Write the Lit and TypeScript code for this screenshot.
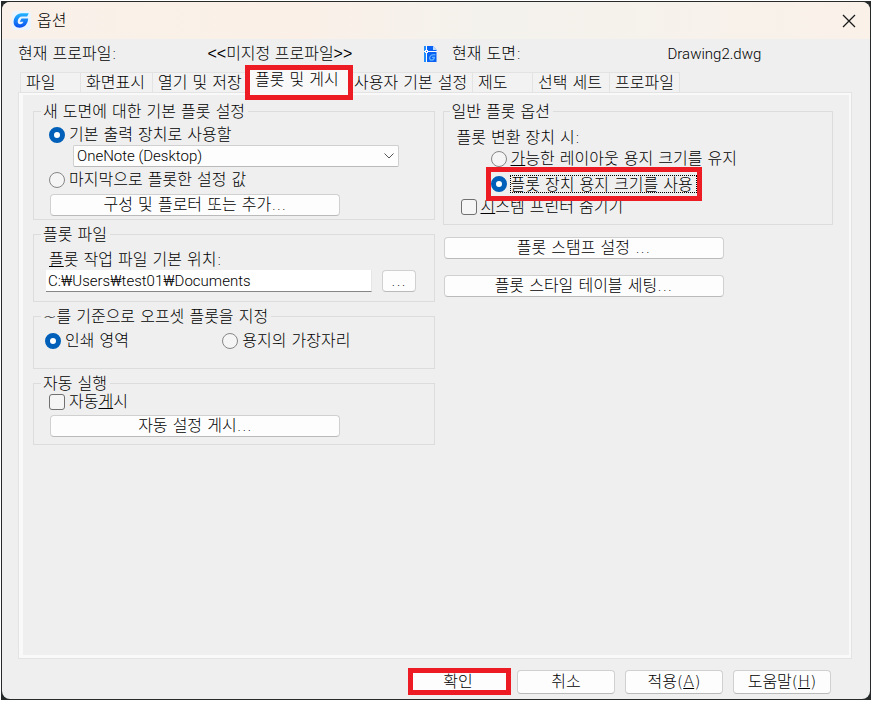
import { LitElement, html, css, svg } from "lit";
import { customElement, state } from "lit/decorators.js";
import { classMap } from "lit/directives/class-map.js";

const TABS = ["파일", "화면표시", "열기 및 저장", "플롯 및 게시", "사용자 기본 설정", "제도", "선택 세트", "프로파일"];

const logo = svg`
  <svg class="logo" viewBox="0 0 20 20" aria-hidden="true">
    <defs>
      <linearGradient id="lg" x1="0" y1="0" x2="0" y2="1">
        <stop offset="0" stop-color="#22b4ff"></stop>
        <stop offset="1" stop-color="#0b4ff0"></stop>
      </linearGradient>
    </defs>
    <rect width="20" height="20" rx="4" fill="#eaf5ff"></rect>
    <path fill="url(#lg)" d="M17.6 2.4 L16 5.8 H10.6 C8 5.8 6.2 8 6 10.8 C5.9 12.8 6.9 14 8.6 14 C10.4 14 11.6 13 12 11.4 H8.2 L10 8 H17 C16.8 13.8 13.2 17.6 7.8 17.6 C3.8 17.6 1.6 15.2 1.7 11.4 C1.9 6.2 5.4 2.6 10 2.4 Z"></path>
  </svg>`;

const closeIcon = svg`
  <svg viewBox="0 0 14 14" width="14" height="14" aria-hidden="true">
    <path d="M1 1 L13 13 M13 1 L1 13" stroke="#1a1a1a" stroke-width="1.3" fill="none"></path>
  </svg>`;

const drawingIcon = svg`
  <svg class="dwg" viewBox="0 0 13 16" aria-hidden="true">
    <path fill="#0a62f5" d="M0 0 H9 L12.5 4 V16 H0 Z"></path>
    <path fill="#1f8dff" d="M0 0 H3 V16 H0 Z"></path>
    <path fill="#bfe0ff" d="M9 0 L12.5 4 H9 Z"></path>
    <path d="M2.5 0 V16 M0 5.5 H13" stroke="#fff" stroke-width="1"></path>
    <rect x="1.5" y="4.5" width="2" height="2" fill="#0a62f5" stroke="#fff" stroke-width="1"></rect>
    <path d="M11.4 8.8 C8 8 5.8 9.6 5.6 12 C5.6 15 10 14.6 10.4 11.4 H8" fill="none" stroke="#62b4ff" stroke-width="1.3"></path>
  </svg>`;

@customElement("app-root")
export class AppRoot extends LitElement {
  @state() private tab = 3;

  static styles = css`
    :host {
      display: flex;
      min-height: 100vh;
      box-sizing: border-box;
      padding: 1px;
      background: #fff;
      color: #000;
      font: 300 16px/20px "DejaVu Sans", "Noto Sans CJK KR", sans-serif;
    }
    * { box-sizing: border-box; }
    button, input, select { font: inherit; color: inherit; }
    .frame { flex: 1; display: flex; background: #262a2b; padding: 1px; }
    .dialog {
      flex: 1;
      display: flex;
      flex-direction: column;
      background: #efefef;
      border-radius: 8px;
      overflow: hidden;
    }
    .titlebar {
      display: flex;
      align-items: center;
      height: 37px;
      padding: 0 14px 0 10px;
      background: linear-gradient(90deg, #f9f1e9, #faf0e8 35%, #f4f2ed 55%, #f5f2ec 70%, #faf1e9);
    }
    .logo { width: 19px; height: 19px; }
    .title { flex: 1; margin: 0 0 0 6px; font-size: 16px; font-weight: 300; }
    .close { display: flex; border: 0; padding: 0; background: none; }
    .info {
      display: grid;
      grid-template-columns: 189fr 216fr 28fr 215fr 202fr;
      align-items: center;
      height: 30px;
      padding-left: 16px;
    }
    .profile { font-family: "Liberation Sans", "Noto Sans CJK KR", sans-serif; }
    .latin, .path input, .picker select { font-family: Roboto, "Noto Sans CJK KR", sans-serif; font-size: 15px; }
    .dwg { width: 13px; height: 16px; display: block; }
    .tabs {
      display: grid;
      grid-template-columns: 60px 72px 96px 100px 124px 60px 77px 71px;
      align-items: end;
      margin-left: 18px;
      height: 23px;
    }
    .tab {
      height: 21px;
      padding: 0 0 0 5px;
      border: 1px solid #e3e3e3;
      border-width: 1px 0 0 1px;
      background: #f2f2f2;
      text-align: left;
      white-space: nowrap;
      line-height: 20px;
    }
    .tab:last-child { border-right-width: 1px; }
    .tab.active {
      position: relative;
      height: 24px;
      padding: 0 0 3px 6px;
      background: #f9f9f9;
    }
    .marked { position: relative; }
    .marked::after {
      content: "";
      position: absolute;
      z-index: 2;
      border: 5px solid #ed1c24;
      pointer-events: none;
    }
    .tab.marked::after { inset: -5px -5px -7px -4px; }
    .panel {
      flex: 1;
      display: grid;
      grid-template-columns: 405fr 390fr;
      gap: 8px;
      align-items: start;
      margin: 0 18px 0 16px;
      padding: 8px 18px 8px 10px;
      border: 1px solid #e3e3e3;
      box-shadow: inset 4px 0 #f9f9f9, inset -2px 0 #f9f9f9, inset 0 2px #f9f9f9, inset 0 -3px #f9f9f9;
    }
    .column { display: flex; flex-direction: column; padding-top: 2px; }
    .left { gap: 6px; padding-left: 4px; }
    fieldset {
      min-width: 0;
      margin: 0;
      padding: 0 15px;
      border: 1px solid #dcdcdc;
    }
    legend {
      height: 16px;
      line-height: 18px;
      margin-left: -8px;
      padding: 0 3px 0 2px;
      white-space: nowrap;
    }
    .row { display: flex; align-items: center; gap: 4px; height: 20px; white-space: nowrap; }
    .row label { line-height: 22px; }
    input[type="radio"], input[type="checkbox"] {
      appearance: none;
      flex: none;
      width: 16px;
      height: 16px;
      margin: 0;
      border: 1px solid #868686;
      background: #f5f5f5;
    }
    input[type="radio"] { border-radius: 50%; }
    input[type="checkbox"] { border-radius: 3px; border-color: #707070; }
    input[type="radio"]:checked { border: 5px solid #005fb8; background: #fff; }
    .button {
      height: 22px;
      padding: 0;
      border: 1px solid #d0d0d0;
      border-bottom-color: #bababa;
      border-radius: 4px;
      background: #fdfdfd;
      line-height: 20px;
      white-space: nowrap;
    }
    .wide { display: block; width: 290px; max-width: 100%; margin-left: 1px; }
    .output { padding-top: 6px; padding-bottom: 3px; }
    .picker { position: relative; display: flex; margin: 0 20px 3px 24px; }
    .picker select {
      appearance: none;
      width: 100%;
      height: 22px;
      padding: 0 24px 0 3px;
      border: 1px solid #d0d0d0;
      border-bottom-color: #bababa;
      border-radius: 2px;
      background: #fdfdfd;
      line-height: 20px;
    }
    .chevron { position: absolute; right: 5px; top: 8px; pointer-events: none; }
    .output .wide { margin-top: 4px; }
    .files { padding-top: 8px; padding-bottom: 9px; padding-left: 12px; }
    .files legend { margin-left: -5px; }
    .files .row { padding-left: 3px; }
    .path { display: flex; gap: 10px; padding-right: 3px; }
    .path input {
      flex: 1;
      min-width: 0;
      height: 22px;
      padding: 0 2px;
      border: 0;
      border-right: 1px solid #e5e5e5;
      border-bottom: 1px solid #868686;
      background: #fff;
    }
    .path .button { width: 34px; }
    .offset { display: grid; grid-template-columns: 178fr 200fr; padding: 7px 12px 17px 11px; }
    .offset legend { margin-left: -4px; }
    .auto { padding-top: 1px; padding-bottom: 7px; }
    .auto .wide { margin-top: 3px; }
    .general { padding: 9px 13px 7px; }
    .general legend { margin-left: -7px; }
    .nested { margin-left: 34px; }
    .keep { margin-top: 1px; }
    .device { margin-top: 5px; width: 206px; }
    .device::after { inset: -7px -5px -7px -5px; }
    .device label { flex: 1; height: 18px; line-height: 18px; border: 1px dotted #000; margin-left: -1px; overflow: hidden; }
    .hide { margin: 3px 0 0 4px; }
    .right .button { width: 280px; margin: 12px 0 0 1px; }
    .right .button + .button { margin-top: 16px; }
    .footer {
      display: flex;
      justify-content: flex-end;
      gap: 10px;
      padding: 11px 39px 5px 16px;
    }
    .footer .button { width: 98px; height: 24px; line-height: 22px; }
    .footer .marked::after { inset: -3px -5px -2px -2px; }
  `;

  render() {
    return html`
      <div class="frame">
        <main class="dialog">
          <header class="titlebar">
            ${logo}
            <h1 class="title">옵션</h1>
            <button class="close" aria-label="닫기">${closeIcon}</button>
          </header>
          <div class="info">
            <span>현재 프로파일:</span>
            <span class="profile">&lt;&lt;미지정 프로파일&gt;&gt;</span>
            ${drawingIcon}
            <span>현재 도면:</span>
            <span class="latin">Drawing2.dwg</span>
          </div>
          <nav class="tabs" role="tablist">
            ${TABS.map(
              (name, i) => html`<button
                role="tab"
                aria-selected=${i === this.tab}
                class=${classMap({ tab: true, active: i === this.tab, marked: i === this.tab })}
                @click=${() => (this.tab = i)}
              >${name}</button>`
            )}
          </nav>
          <section class="panel" role="tabpanel">
            <div class="column left">
              <fieldset class="output">
                <legend>새 도면에 대한 기본 플롯 설정</legend>
                <div class="row">
                  <input type="radio" name="output" id="default" checked />
                  <label for="default">기본 출력 장치로 사용할</label>
                </div>
                <div class="picker">
                  <select aria-label="기본 출력 장치"><option>OneNote (Desktop)</option></select>
                  <svg class="chevron" width="10" height="6" viewBox="0 0 10 6" aria-hidden="true">
                    <path d="M0.5 0.5 L5 5 L9.5 0.5" fill="none" stroke="#555"></path>
                  </svg>
                </div>
                <div class="row">
                  <input type="radio" name="output" id="last" />
                  <label for="last">마지막으로 플롯한 설정 값</label>
                </div>
                <button class="button wide">구성 및 플로터 또는 추가...</button>
              </fieldset>
              <fieldset class="files">
                <legend>플롯 파일</legend>
                <div class="row"><label for="path"><u>플</u>롯 작업 파일 기본 위치:</label></div>
                <div class="path">
                  <input id="path" type="text" value="C:₩Users₩test01₩Documents" />
                  <button class="button" aria-label="찾아보기">...</button>
                </div>
              </fieldset>
              <fieldset class="offset">
                <legend>~를 기준으로 오프셋 플롯을 지정</legend>
                <div class="row">
                  <input type="radio" name="offset" id="area" checked />
                  <label for="area">인쇄 영역</label>
                </div>
                <div class="row">
                  <input type="radio" name="offset" id="edge" />
                  <label for="edge">용지의 가장자리</label>
                </div>
              </fieldset>
              <fieldset class="auto">
                <legend>자동 실행</legend>
                <div class="row">
                  <input type="checkbox" id="publish" />
                  <label for="publish">자동<u>게</u>시</label>
                </div>
                <button class="button wide">자동 설정 게시...</button>
              </fieldset>
            </div>
            <div class="column right">
              <fieldset class="general">
                <legend>일반 플롯 옵션</legend>
                <div class="row">플롯 변환 장치 시:</div>
                <div class="row nested keep">
                  <input type="radio" name="paper" id="layout" />
                  <label for="layout"><u>가</u>능한 레이아웃 용지 크기를 유지</label>
                </div>
                <div class="row nested device marked">
                  <input type="radio" name="paper" id="device" checked />
                  <label for="device">플롯 장치 용지 크기를 사용</label>
                </div>
                <div class="row hide">
                  <input type="checkbox" id="printers" />
                  <label for="printers"><u>시</u>스템 프린터 숨기기</label>
                </div>
              </fieldset>
              <button class="button">플롯 스탬프 설정 ...</button>
              <button class="button">플롯 스타일 테이블 세팅...</button>
            </div>
          </section>
          <footer class="footer">
            <button class="button marked">확인</button>
            <button class="button">취소</button>
            <button class="button">적용(<u>A</u>)</button>
            <button class="button">도움말(<u>H</u>)</button>
          </footer>
        </main>
      </div>
    `;
  }
}
